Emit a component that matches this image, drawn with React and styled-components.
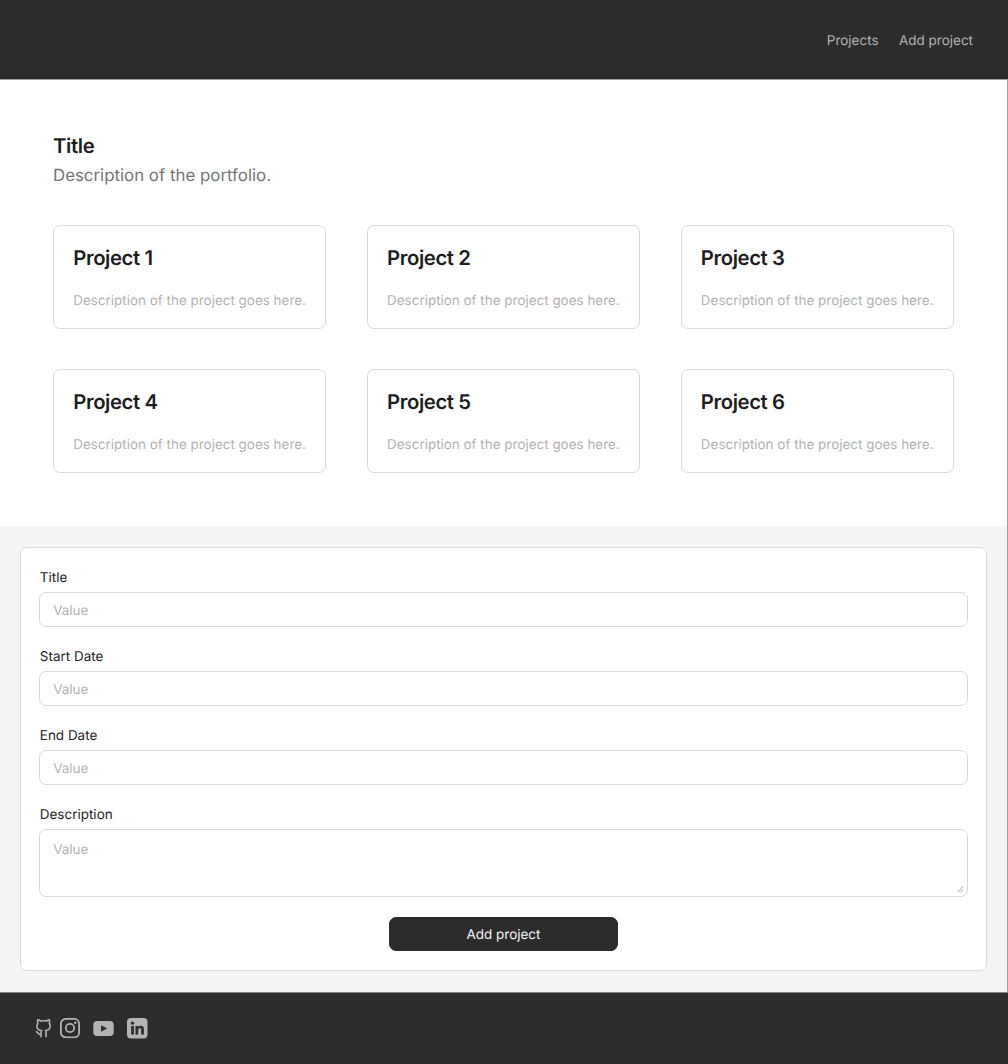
import React from 'react';
import styled, { createGlobalStyle } from 'styled-components';

const GlobalStyle = createGlobalStyle`
  *, *::before, *::after { box-sizing: border-box; }
  body {
    margin: 0;
    background: #fff;
    font-family: Inter, "Liberation Sans", sans-serif;
    color: #1e1e1e;
    text-rendering: geometricPrecision;
  }
  h1, h2, p { margin: 0; }
`;

const Page = styled.div`
  width: 1008px;
  height: 1064px;
  display: flex;
  flex-direction: column;
  overflow: hidden;
`;

const Header = styled.header`
  height: 80px;
  flex: none;
  background: #2c2c2c;
  border-bottom: 1px solid #a0a0a0;
`;

const Nav = styled.nav`
  display: flex;
  justify-content: flex-end;
  gap: 20.5px;
  padding: 31px 35px 0 0;
`;

const NavLink = styled.a`
  font-size: 13.48px;
  line-height: 20px;
  color: #b3b3b3;
`;

const Main = styled.main`
  display: flex;
  flex-direction: column;
  flex: none;
  border-right: 1px solid #a0a0a0;
`;

const Portfolio = styled.section`
  height: 446px;
  padding: 53px 53px 0;
`;

const Title = styled.h1`
  font-size: 20.3px;
  line-height: 25px;
  font-weight: 600;
  letter-spacing: -0.018em;
`;

const Subtitle = styled.p`
  margin-top: 7px;
  font-size: 16.85px;
  line-height: 22px;
  color: #757575;
`;

const Grid = styled.div`
  display: grid;
  grid-template-columns: repeat(3, 273.4px);
  gap: 40px 40.4px;
  margin-top: 38px;
`;

const Card = styled.article`
  height: 104px;
  padding: 20px 19.3px;
  border: 1px solid #d9d9d9;
  border-radius: 7px;
`;

const CardTitle = styled.h2`
  font-size: 20.3px;
  line-height: 24px;
  font-weight: 600;
  letter-spacing: -0.02em;
`;

const CardText = styled.p`
  margin-top: 21px;
  font-size: 13.45px;
  line-height: 20px;
  color: #b3b3b3;
  white-space: nowrap;
`;

const FormSection = styled.section`
  height: 466px;
  padding: 21px 20px 0;
  background: #f4f4f4;
`;

const Form = styled.form`
  display: flex;
  flex-direction: column;
  gap: 19px;
  width: 967px;
  height: 424px;
  padding: 20px 18px 0;
  border: 1px solid #d9d9d9;
  border-radius: 7px;
  background: #fff;
`;

const Field = styled.label`
  display: flex;
  flex-direction: column;
  gap: 4px;
  font-size: 13.48px;
  line-height: 20px;

  & + & {
    margin-top: 1px;
  }
`;

const FieldName = styled.span`
  padding-left: 0.8px;
`;

const Control = styled.span`
  position: relative;
  display: block;
  height: ${(p) => (p.$tall ? '68px' : '35px')};
  padding: ${(p) => (p.$tall ? '10px' : '8px')} 13.2px 0;
  border: 1px solid #d9d9d9;
  border-radius: 7px;
  color: #b3b3b3;
`;

const Grip = styled.svg`
  position: absolute;
  right: 3px;
  bottom: 3px;
  width: 7px;
  height: 7px;
`;

const Submit = styled.button`
  align-self: center;
  width: 229px;
  height: 34px;
  margin-top: 1px;
  padding: 2px 0 0;
  border: 1px solid #2c2c2c;
  border-radius: 7px;
  background: #2c2c2c;
  color: #f5f5f5;
  font: 400 13.48px/20px Inter, "Liberation Sans", sans-serif;
  text-rendering: inherit;
`;

const Footer = styled.footer`
  display: flex;
  align-items: flex-start;
  flex: 1;
  padding: 25px 0 0 34px;
  background: #2c2c2c;
  border-top: 1px solid #858585;
`;

const Icon = styled.svg`
  width: ${(p) => p.$size}px;
  height: ${(p) => p.$size}px;
  margin: ${(p) => p.$margin || 0};
  flex: none;
  color: #b3b3b3;
`;

const projects = [1, 2, 3, 4, 5, 6];
const fields = ['Title', 'Start Date', 'End Date', 'Description'];

export default function App() {
  return (
    <Page>
      <GlobalStyle />
      <Header>
        <Nav>
          <NavLink>Projects</NavLink>
          <NavLink>Add project</NavLink>
        </Nav>
      </Header>
      <Main>
        <Portfolio>
          <Title>Title</Title>
          <Subtitle>Description of the portfolio.</Subtitle>
          <Grid>
            {projects.map((n) => (
              <Card key={n}>
                <CardTitle>Project {n}</CardTitle>
                <CardText>Description of the project goes here.</CardText>
              </Card>
            ))}
          </Grid>
        </Portfolio>
        <FormSection>
          <Form>
            {fields.map((name) => {
              const tall = name === 'Description';
              return (
                <Field key={name}>
                  <FieldName>{name}</FieldName>
                  <Control $tall={tall}>
                    Value
                    {tall && (
                      <Grip viewBox="0 0 7 7" fill="none" stroke="#a0a0a0">
                        <path d="M0.5 6.2 6 0.5M3.5 6.2 6 3.6" />
                      </Grip>
                    )}
                  </Control>
                </Field>
              );
            })}
            <Submit type="button">Add project</Submit>
          </Form>
        </FormSection>
      </Main>
      <Footer>
        <Icon $size={20} viewBox="0 0 20 20" fill="none" stroke="currentColor" strokeWidth="1.6" strokeLinecap="round" strokeLinejoin="round">
          <path d="M7 18.600V14.300C7 13.500 7.200 12.900 7.700 12.500C4.800 12.300 2.900 10.700 2.900 7.900C2.900 6.900 3.200 6.100 3.800 5.400C3.400 4.200 3.400 3 3.700 1.900C4.900 1.900 5.900 2.500 6.700 3.100C8.600 2.600 10.600 2.600 12.400 3.100C13.200 2.500 14.200 1.900 15.400 1.900C15.700 3 15.700 4.200 15.300 5.400C15.900 6.100 16.200 6.900 16.200 7.900C16.200 10.700 14.300 12.300 11.400 12.500C11.900 12.900 12.100 13.500 12.100 14.300V18.600M7 16.400C4.300 17 4.400 14.200 2.500 13.900" />
        </Icon>
        <Icon $size={20} $margin="0 0 0 6px" viewBox="0 0 20 20" fill="none" stroke="currentColor" strokeWidth="1.8">
          <rect x="0.900" y="0.900" width="18.200" height="18.400" rx="4.800" />
          <circle cx="10" cy="10" r="4.200" />
          <circle cx="15.300" cy="4.700" r="1.200" fill="currentColor" stroke="none" />
        </Icon>
        <Icon $size={21} $margin="0 0 0 13px" viewBox="0 0 21 21">
          <rect x="0.300" y="3" width="20.400" height="15" rx="3.800" fill="currentColor" />
          <path d="m8 7.300 6.200 3.200L8 13.700z" fill="#2c2c2c" />
        </Icon>
        <Icon $size={21} $margin="0 0 0 13px" viewBox="0 0 21 21">
          <rect x="0" y="0" width="20.500" height="20.500" rx="4" fill="currentColor" />
          <g fill="#2c2c2c">
            <circle cx="5.500" cy="5.200" r="1.600" />
            <path d="M4.200 8h2.700v8.500H4.200zM8.500 8h2.700v1.200c.5-.9 1.500-1.400 2.700-1.400 2.300 0 3 1.500 3 3.700v5h-2.700v-4.400c0-1.200-.3-1.900-1.300-1.900s-1.700.7-1.700 1.900v4.400H8.500z" />
          </g>
        </Icon>
      </Footer>
    </Page>
  );
}
